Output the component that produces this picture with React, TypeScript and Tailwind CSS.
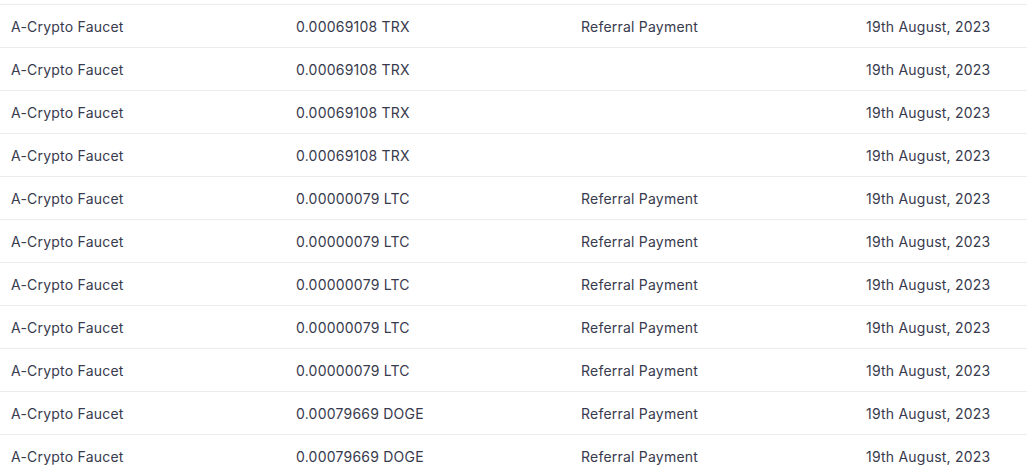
import React from "react";

const rows: [string, string, string, string][] = [
  ["A-Crypto Faucet", "0.00069108 TRX", "Referral Payment", "19th August, 2023"],
  ["A-Crypto Faucet", "0.00069108 TRX", "", "19th August, 2023"],
  ["A-Crypto Faucet", "0.00069108 TRX", "", "19th August, 2023"],
  ["A-Crypto Faucet", "0.00069108 TRX", "", "19th August, 2023"],
  ["A-Crypto Faucet", "0.00000079 LTC", "Referral Payment", "19th August, 2023"],
  ["A-Crypto Faucet", "0.00000079 LTC", "Referral Payment", "19th August, 2023"],
  ["A-Crypto Faucet", "0.00000079 LTC", "Referral Payment", "19th August, 2023"],
  ["A-Crypto Faucet", "0.00000079 LTC", "Referral Payment", "19th August, 2023"],
  ["A-Crypto Faucet", "0.00000079 LTC", "Referral Payment", "19th August, 2023"],
  ["A-Crypto Faucet", "0.00079669 DOGE", "Referral Payment", "19th August, 2023"],
  ["A-Crypto Faucet", "0.00079669 DOGE", "Referral Payment", "19th August, 2023"],
];

export default function App() {
  return (
    <div
      className="w-[1027px] h-[473px] overflow-hidden bg-white text-[14px] tracking-[0.22px] text-[#383a4d]"
      style={{ fontFamily: "Inter, 'Noto Sans', sans-serif" }}
    >
      <div className="h-[4px]" />
      <div className="w-[1140px]">
        {rows.map((r, i) => (
          <div key={i} className="grid grid-cols-[285px_285px_285px_285px] h-[43px] pt-[1px] border-t border-[#ededf0] items-center">
            {r.map((c, j) => (
              <div key={j} className="px-[11px] whitespace-nowrap">
                {c}
              </div>
            ))}
          </div>
        ))}
      </div>
    </div>
  );
}
